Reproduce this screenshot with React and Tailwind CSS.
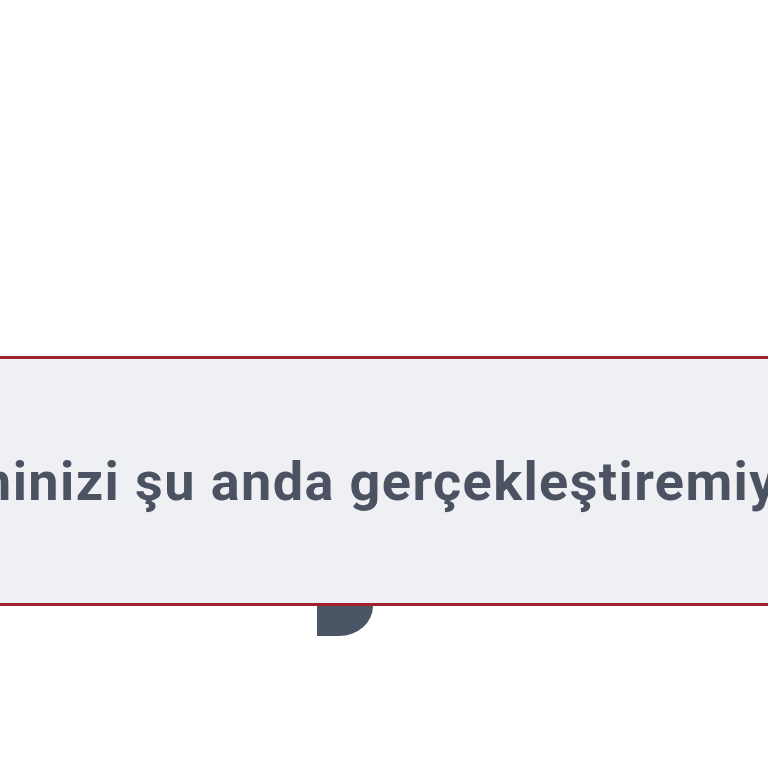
export default function App() {
  return (
    <div className="h-screen w-full overflow-hidden bg-white flex flex-col">
      <div className="h-[356px] shrink-0" />
      <div className="h-[250px] shrink-0 border-y-[3px] border-[#a1222e] bg-[#eff0f4] flex items-center justify-center overflow-hidden">
        <p className="ml-[12px] whitespace-nowrap font-['Roboto',sans-serif] font-bold text-[54px] tracking-[1.4px] text-[#4b5261]">
          İşleminizi şu anda gerçekleştiremiyoruz.
        </p>
      </div>
      <div className="ml-[317px] w-[56px] h-[30px] shrink-0 bg-[#4a5566] rounded-br-[34px_30px]" />
    </div>
  );
}
